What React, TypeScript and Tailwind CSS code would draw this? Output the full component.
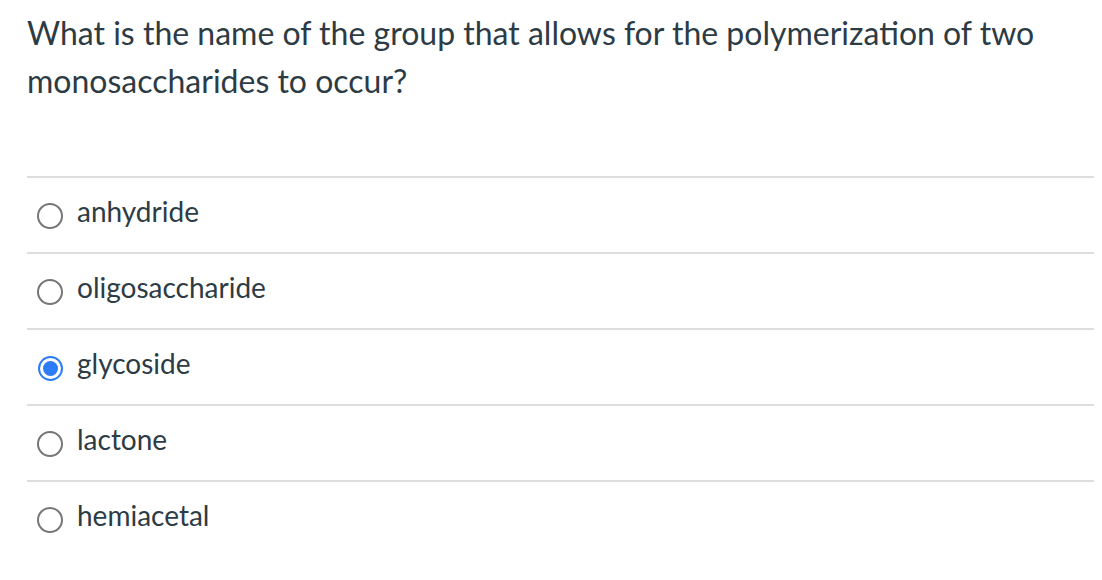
export default function App() {
  const options = ["anhydride", "oligosaccharide", "glycoside", "lactone", "hemiacetal"];
  const selected = "glycoside";

  return (
    <div className="w-[1102px] h-[580px] bg-white font-['Lato',sans-serif] text-[#2d3b45] overflow-hidden">
      <div className="pl-[27px] pr-[8px] pt-[9px]">
        <p className="text-[32px] leading-[48px] pr-[40px]">
          What is the name of the group that allows for the polymerization of two monosaccharides to occur?
        </p>
        <div className="mt-[71px]">
          {options.map((opt) => (
            <div key={opt} className="flex items-center h-[76px] border-t-2 border-[#dddddd]">
              <div className="w-[50px] flex justify-end pr-[14px]">
                {opt === selected ? (
                  <span className="w-[25px] h-[25px] rounded-full border-2 border-[#2b7cf6] flex items-center justify-center mt-[2px]">
                    <span className="w-[15px] h-[15px] rounded-full bg-[#2b7cf6]" />
                  </span>
                ) : (
                  <span className="w-[26px] h-[26px] rounded-full border-2 border-[#767676] mt-[2px]" />
                )}
              </div>
              <span className="text-[28px] leading-none mb-[9px]">{opt}</span>
            </div>
          ))}
        </div>
      </div>
    </div>
  );
}
